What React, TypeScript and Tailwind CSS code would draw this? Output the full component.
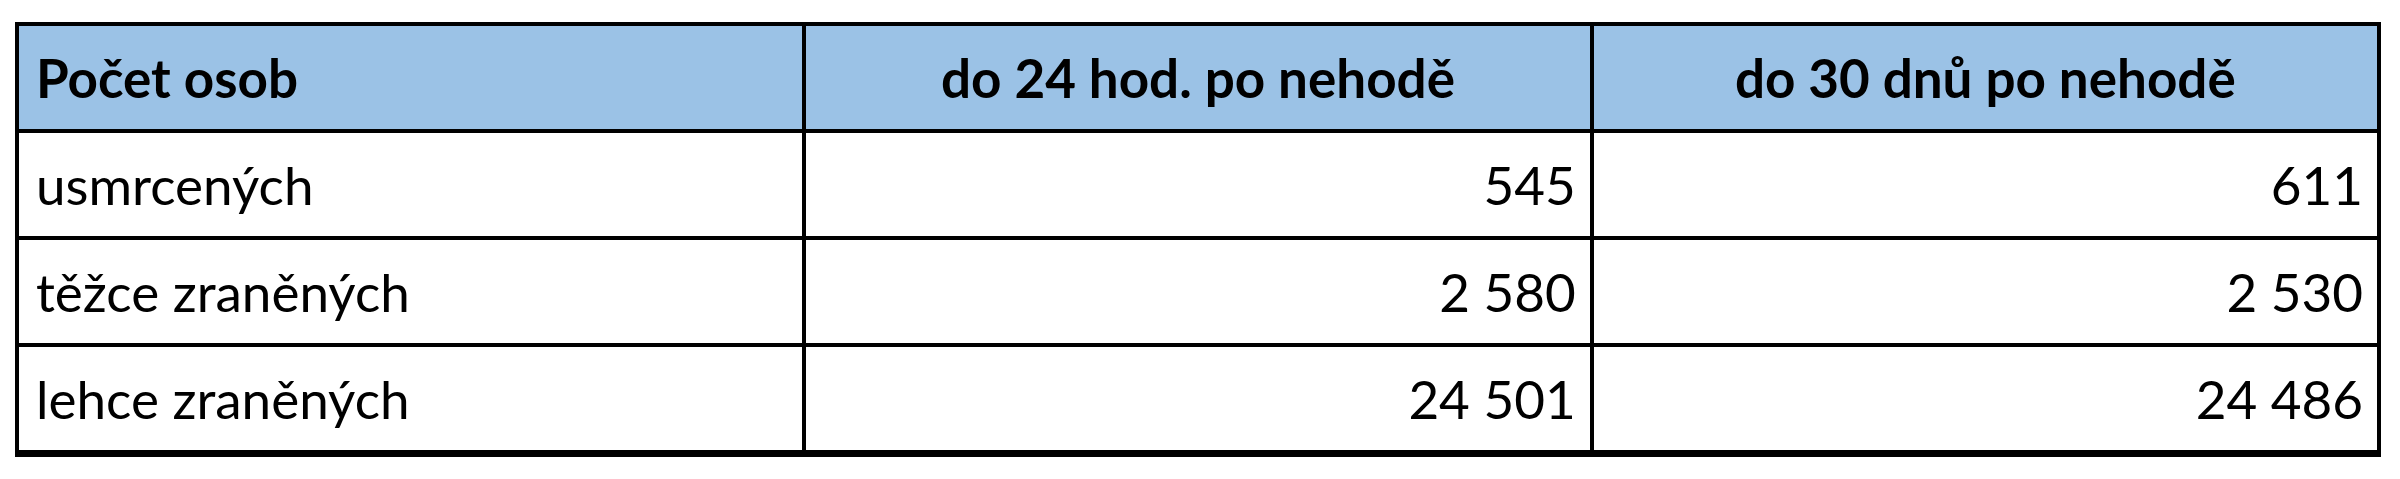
const HEAD = ["Počet osob", "do 24 hod. po nehodě", "do 30 dnů po nehodě"];

const ROWS: [string, string, string][] = [
  ["usmrcených", "545", "611"],
  ["těžce zraněných", "2 580", "2 530"],
  ["lehce zraněných", "24 501", "24 486"],
];

export default function App() {
  return (
    <div className="w-[2400px] h-[479px] bg-white pt-[22px] pl-[15px] pr-[19px] font-['Lato',_'Noto_Sans',_sans-serif] text-black">
      <div className="grid grid-cols-3 gap-[4px] bg-black p-[4px] pb-[7px]">
        {/* Header */}
        <div className="h-[103px] bg-[#9bc2e6] flex items-center px-[17px] text-[53px] font-bold">
          {HEAD[0]}
        </div>
        <div className="h-[103px] bg-[#9bc2e6] flex items-center justify-center text-[53px] font-bold">
          {HEAD[1]}
        </div>
        <div className="h-[103px] bg-[#9bc2e6] flex items-center justify-center text-[53px] font-bold">
          {HEAD[2]}
        </div>

        {/* Body */}
        {ROWS.map((r) => (
          <Row key={r[0]} cells={r} />
        ))}
      </div>
    </div>
  );
}

function Row({ cells }: { cells: [string, string, string] }) {
  return (
    <>
      <div className="h-[103px] bg-white flex items-center px-[17px] text-[53px]">{cells[0]}</div>
      <div className="h-[103px] bg-white flex items-center justify-end px-[14px] text-[53px]">{cells[1]}</div>
      <div className="h-[103px] bg-white flex items-center justify-end px-[14px] text-[53px]">{cells[2]}</div>
    </>
  );
}
